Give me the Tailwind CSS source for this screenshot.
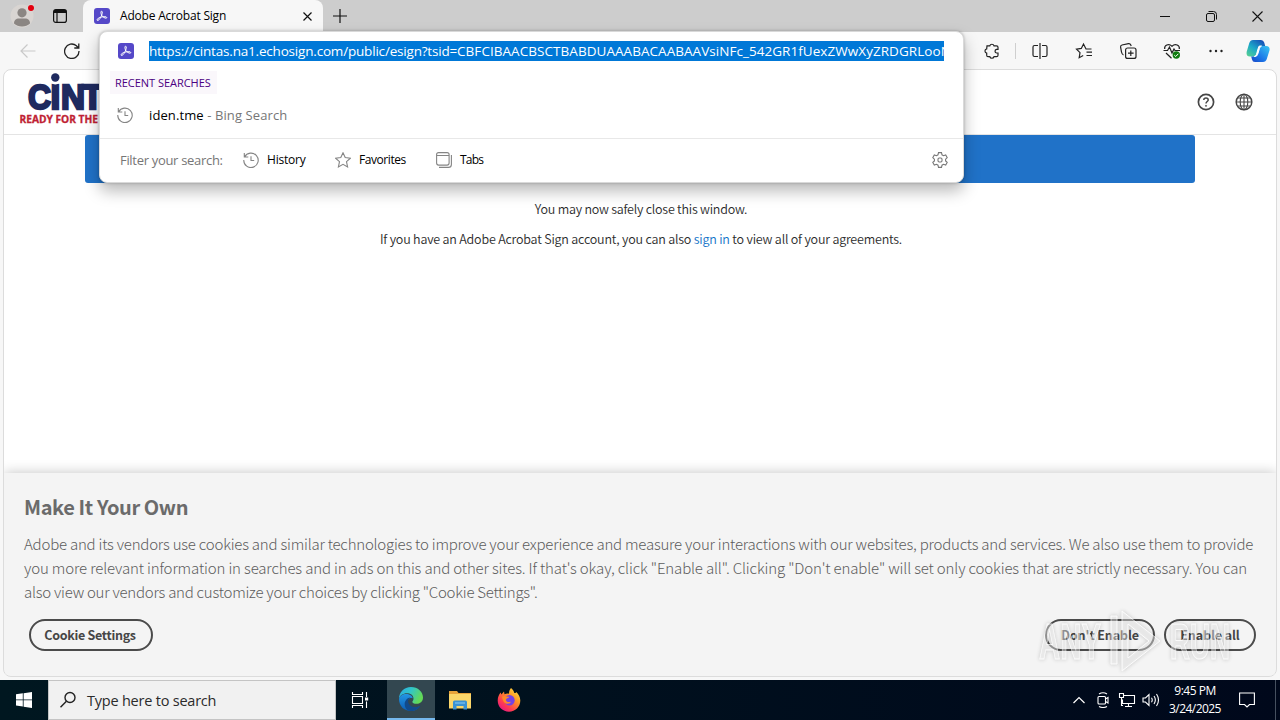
<!DOCTYPE html>
<html lang="en">
<head>
<meta charset="utf-8">
<title>Adobe Acrobat Sign</title>
<script src="https://cdn.jsdelivr.net/npm/@tailwindcss/browser@4"></script>
</head>
<body class="relative flex h-[720px] w-[1280px] flex-col overflow-hidden bg-[#f7f7f7] font-['Open_Sans',sans-serif] text-black">

<!-- Tab strip -->
<header class="flex h-8 shrink-0 items-end bg-[#cdcdcd]">
  <div class="flex h-8 w-[83px] items-center">
    <svg class="ml-[10px] h-6 w-6" viewBox="0 0 24 24"><circle cx="12" cy="12" r="11.5" fill="#d9d5d2"/><circle cx="12" cy="8.800" r="4.600" fill="#8b8683"/><path d="M4 19.500c0-3.500 2-5 5-5h6c3 0 5 1.500 5 5-4 4-12 4-16 0z" fill="#8b8683"/><circle cx="21" cy="4" r="4" fill="#d9d5d2"/><circle cx="21" cy="4" r="3" fill="#e3000f"/></svg>
    <svg class="ml-[18px] h-4 w-4" viewBox="0 0 16 16" fill="none" stroke="#111" stroke-width="1.200"><rect x="1.600" y="1.600" width="12.800" height="12.800" rx="2.200"/><path d="M2 3.500h12" stroke-width="3"/><path d="M5 5v9"/></svg>
  </div>
  <div class="flex h-8 w-[240px] items-center rounded-t-lg bg-[#f7f7f7]">
    <svg class="ml-[11px] h-4 w-4" viewBox="0 0 16 16"><rect width="16" height="16" rx="3" fill="#5548c8"/><path d="M3.200 12.300c-1-.9 1.600-2.600 4-3.200 2.300-.6 5.600-.7 5.600.5 0 1.300-3.200.3-4.700-1.700C6.800 6.200 6.500 3.200 7.600 3.200c1.300 0 .6 3.300-.8 6-1 2-2.800 3.900-3.600 3.100z" fill="none" stroke="#fff" stroke-width="1"/></svg>
    <span class="ml-[10px] text-[12px] leading-4 tracking-[-0.200px] whitespace-nowrap">Adobe Acrobat Sign</span>
    <svg class="mr-[11px] ml-auto h-[9px] w-[9px]" viewBox="0 0 9 9" stroke="#111" stroke-width="1.200"><path d="M.5.5l8 8M8.500.5l-8 8"/></svg>
  </div>
  <div class="flex h-8 flex-1 items-center">
    <svg class="ml-[10px] h-[14px] w-[14px]" viewBox="0 0 14 14" stroke="#111" stroke-width="1.200"><path d="M7 0v14M0 7h14"/></svg>
    <svg class="ml-auto h-[11px] w-[10px]" viewBox="0 0 10 11" stroke="#111"><path d="M0 5.500h10"/></svg>
    <svg class="ml-9 h-[11px] w-[11px]" viewBox="0 0 11 11" fill="none" stroke="#111"><rect x=".5" y="2.500" width="8" height="8" rx="1.500"/><path d="M2.500.5h5a3 3 0 0 1 3 3v5"/></svg>
    <svg class="mr-[17px] ml-[35px] h-[11px] w-[11px]" viewBox="0 0 11 11" stroke="#111" stroke-width="1.100"><path d="M.5.5l10 10M10.500.5l-10 10"/></svg>
  </div>
</header>

<!-- Toolbar -->
<nav class="flex h-[37px] shrink-0 items-center bg-[#f7f7f7]">
  <svg class="ml-5 h-4 w-4" viewBox="0 0 16 16" fill="none" stroke="#c9c9c9" stroke-width="1.200"><path d="M15.500 8H1M7.500 1.500L1 8l6.500 6.500"/></svg>
  <svg class="ml-7 h-4 w-4" viewBox="0 0 16 16" fill="none" stroke="#222" stroke-width="1.300"><path d="M15 8a7.200 7.200 0 1 1-2.600-5.300L14.500 5M14.800.5V5h-4.500"/></svg>
  <svg class="ml-auto h-[18px] w-[18px]" viewBox="0 0 18 18" fill="none" stroke="#222" stroke-width="1.200"><path d="M4 3.800h2.800a2.200 2.200 0 0 1 4.200 0h2.500q1.500 0 1.500 1.500v2h-1.500a1.900 1.900 0 0 0 0 3.700H15v2.200q0 1.500-1.500 1.500H11a2.200 2.200 0 0 1-4.200 0H5q-1.300 0-1.300-1.500v-2a2.200 2.200 0 0 1 0-4.300z"/></svg>
  <span class="ml-[14px] h-4 w-px bg-[#cfcfcf]"></span>
  <svg class="ml-[15px] h-[18px] w-[18px]" viewBox="0 0 18 18" fill="none" stroke="#222" stroke-width="1.200"><path d="M7 3.500H3.500Q2 3.500 2 5v8q0 1.500 1.500 1.500H7M11 3.500h3.500Q16 3.500 16 5v8q0 1.500-1.500 1.500H11M9 1v16"/></svg>
  <svg class="ml-[26px] h-[18px] w-[18px]" viewBox="0 0 18 18" fill="none" stroke="#222" stroke-width="1.200"><path d="M16.500 7H11L8.500 2 6.300 6.400l-4.800.8 3.500 3.500-.8 5L8.200 13.500M11.500 10.200h5.500M11.500 13.500h5.500"/></svg>
  <svg class="ml-[26px] h-[18px] w-[18px]" viewBox="0 0 18 18" fill="none" stroke="#222" stroke-width="1.200"><rect x="6.600" y="6" width="10.400" height="10.400" rx="2"/><path d="M11.800 8.500v5.500M9 11.200h5.600M4.500 13C3 12.500 2.800 11.500 2.500 10L1.600 5.200Q1.300 3.400 3 3l6.500-1.400q1.600-.3 2.300 1.400l.4 1"/></svg>
  <svg class="ml-[26px] h-[18px] w-[18px]" viewBox="0 0 18 18" fill="none" stroke="#222" stroke-width="1.200"><path d="M1.700 7C1 3.500 5.500.8 9 4.200c3.500-3.400 8-.7 7.300 2.800M.5 8.500h4l2-3.500 2.500 6 2-4 1 1.500h5M3 11l5.500 5.300"/><circle cx="13.300" cy="13" r="3.700" fill="#107c10" stroke="none"/><path d="M11.300 13.200l1.400 1.300 2.600-2.700" stroke="#fff" stroke-width="1"/></svg>
  <svg class="ml-[27px] h-4 w-4" viewBox="0 0 16 16" fill="#222"><circle cx="2.500" cy="8" r="1.200"/><circle cx="8" cy="8" r="1.200"/><circle cx="13.500" cy="8" r="1.200"/></svg>
  <svg class="mr-[10px] ml-[22px] h-6 w-6" viewBox="0 0 24 24">
    <defs><linearGradient id="cpA" x1="0" y1="1" x2=".8" y2="0"><stop offset="0" stop-color="#5bd38d"/><stop offset=".5" stop-color="#1ba8c9"/><stop offset="1" stop-color="#174fb7"/></linearGradient><linearGradient id="cpB" x1="1" y1="0" x2="0" y2="1"><stop offset="0" stop-color="#38c8f2"/><stop offset=".6" stop-color="#1b76e8"/><stop offset="1" stop-color="#1845c5"/></linearGradient></defs>
    <path d="M7 1h8q2.500 0 3.200 2.500l1 3.500h-4q-2 0-2.600 2l-1.800 6.500q-.6 2-2.600 2H4Q0 17.500.6 13L3.300 4Q4.300 1 7 1z" fill="url(#cpA)"/><path d="M17 23H9q-2.500 0-3-2.500l-.8-3h3.200q2 0 2.600-2L12.800 9q.6-2 2.600-2H20q4 0 3.600 4l-2.800 9Q19.800 23 17 23z" fill="url(#cpB)"/><path d="M13.300 7h2.200q-1.500.5-2 2.300l-1.800 6q-.6 2.200-3 2.200h-.5q1.800-.4 2.300-2.200l1.700-6q.4-1.600 1.100-2.300z" fill="#fff" stroke="#fff" stroke-width="1"/>
  </svg>
</nav>

<!-- Page -->
<main class="mx-[3px] mb-[3px] flex flex-1 flex-col overflow-hidden rounded-lg border border-[#dcdcdc] bg-white">
  <div class="flex h-[65px] shrink-0 items-center border-b border-[#e4e4e4]">
    <svg class="ml-[14px] h-[60px] w-[90px]" viewBox="18 72 90 60" font-family="Liberation Sans" font-weight="700">
      <g fill="#1f2a5f" stroke="#1f2a5f" font-size="35" stroke-width="2.400"><text x="28" y="109" textLength="23" lengthAdjust="spacingAndGlyphs">C</text><text x="50.500" y="109">I</text><text x="61" y="109" textLength="24" lengthAdjust="spacingAndGlyphs">N</text><text x="82" y="109">T</text></g><circle cx="55.300" cy="78.500" r="6" fill="#fff"/><circle cx="55.300" cy="77.500" r="4.200" fill="#1f2a5f"/>
      <text x="19.500" y="123" font-family="Open Sans" font-weight="700" font-size="10" textLength="78.500" lengthAdjust="spacingAndGlyphs" fill="#c01f34" stroke="#c01f34" stroke-width=".3">READY FOR THE</text>
    </svg>
    <svg class="mt-[-1px] ml-auto h-5 w-5" viewBox="0 0 20 20" fill="none" stroke="#464646" stroke-width="1.700"><circle cx="10" cy="10" r="7.600"/><path d="M7.800 8c0-2.700 4.400-2.700 4.400 0 0 1.500-2.200 1.600-2.200 3.500" stroke-width="1.500"/><circle cx="10" cy="13.800" r=".6" fill="#464646" stroke-width=".7"/></svg>
    <svg class="mt-[-1px] mr-[22.500px] ml-[17.500px] h-5 w-5" viewBox="0 0 20 20" fill="none" stroke="#464646" stroke-width="1.100"><circle cx="10" cy="10" r="7.800" stroke-width="1.500"/><ellipse cx="10" cy="10" rx="3.800" ry="7.800"/><path d="M10 2v16M2 10h16M3.500 6h13M3.500 14h13"/></svg>
  </div>
  <div class="mx-auto h-12 w-[1110px] shrink-0 rounded-[3px] bg-[#2072c8]"></div>
  <div class="flex flex-col items-center pt-4 pl-0.5 font-['Noto_Sans_CJK_SC',sans-serif] text-[12.500px] font-[350] text-[#2c2c2c]">
    <p class="h-[30px] leading-5 tracking-[-0.230px] whitespace-nowrap">You may now safely close this window.</p>
    <p class="h-[30px] leading-5 tracking-[-0.200px] whitespace-nowrap">If you have an Adobe Acrobat Sign account, you can also <a class="text-[#1473c8]">sign in</a> to view all of your agreements.</p>
  </div>
  <section class="mt-auto flex h-[203px] shrink-0 flex-col bg-[#f4f4f4] px-5 pt-[21px] font-['Noto_Sans_CJK_SC',sans-serif] text-[#6b6b6b] shadow-[0_0_12px_rgba(0,0,0,0.24)]">
    <h2 class="text-[20px] leading-[26px] font-bold tracking-[-0.400px] whitespace-nowrap">Make It Your Own</h2>
    <div class="mt-3 text-[15px] leading-6 font-light whitespace-nowrap text-[#5c5c5c]">
      <p class="tracking-[-0.220px]">Adobe and its vendors use cookies and similar technologies to improve your experience and measure your interactions with our websites, products and services. We also use them to provide</p>
      <p class="tracking-[-0.148px]">you more relevant information in searches and in ads on this and other sites. If that's okay, click "Enable all". Clicking "Don't enable" will set only cookies that are strictly necessary. You can</p>
      <p class="tracking-[-0.250px]">also view our vendors and customize your choices by clicking "Cookie Settings".</p>
    </div>
    <div class="mt-[15px] flex text-[12.500px] font-bold text-[#464646]">
      <button class="ml-[5px] h-8 w-[124px] rounded-full border-2 border-[#4b4b4b] pr-0.5 leading-7 tracking-[-0.300px] whitespace-nowrap">Cookie Settings</button>
      <button class="ml-auto h-8 w-[110px] rounded-full border-2 border-[#4b4b4b] leading-7 tracking-[-0.100px] whitespace-nowrap">Don't Enable</button>
      <button class="ml-[9px] h-8 w-[92px] rounded-full border-2 border-[#4b4b4b] leading-7 tracking-[-0.100px] whitespace-nowrap">Enable all</button>
    </div>
  </section>
</main>

<!-- Taskbar -->
<footer class="flex h-10 shrink-0 items-center bg-linear-to-r from-[#001720] to-[#00081b] text-white">
  <svg class="ml-4 h-4 w-4" viewBox="0 0 16 16" fill="#fff"><path d="M0 2.300l6.800-1v6.200H0zM7.600 1.200L16 0v7.500H7.600zM0 8.300h6.800v6.200L0 13.600zM7.600 8.300H16V16l-8.400-1.200z"/></svg>
  <div class="ml-4 flex h-10 w-[288px] items-center border border-[#c4c4c4] bg-[#f1f1f1] text-[#2b2b2b]">
    <svg class="ml-[10px] h-[18px] w-[18px]" viewBox="0 0 18 18" fill="none" stroke="#222" stroke-width="1.400"><circle cx="11" cy="6.500" r="5"/><path d="M7.400 10.200L1.500 16.300"/></svg>
    <span class="mt-0.5 ml-[10px] text-[14.500px] leading-5 tracking-[-0.220px] whitespace-nowrap">Type here to search</span>
  </div>
  <div class="flex h-10 w-[51px] items-center">
    <svg class="ml-[15px] h-[18px] w-[18px]" viewBox="0 0 18 18" fill="none" stroke="#fff" stroke-width="1.100"><path d="M1.500 1v2.500h10V1M1.500 17v-2.500h10V17M1.500 5.500h10v7h-10zM15.500 1v5M15.500 10.500V17"/><path d="M14 6.500h3.200v3H14z" fill="#fff" stroke="none"/></svg>
  </div>
  <div class="flex h-10 w-12 items-center justify-center border-b-2 border-[#76b9ed] bg-[#334750]">
    <svg class="h-6 w-6" viewBox="0 0 24 24"><defs><linearGradient id="eg" x1="0" y1="0" x2="1" y2=".4"><stop offset="0" stop-color="#2aa9e3"/><stop offset=".5" stop-color="#31c5c9"/><stop offset="1" stop-color="#63d957"/></linearGradient><linearGradient id="eb" x1="0" y1="0" x2="0" y2="1"><stop offset="0" stop-color="#2396e4"/><stop offset="1" stop-color="#0b5db5"/></linearGradient></defs><path d="M0 12C0 5 5 0 12 0s12 5 12 10.500c0 4-3 6.300-6.500 6.300-2.600 0-4.200-1-4.200-1.800 0-.7 1.200-1.200 1.200-3.200C14.500 8 11 6.300 8 6.300 4 6.300 1 8.500 0 12z" fill="url(#eg)"/><path d="M0 12c.8-3.500 4-5 7-5 3.500 0 6.500 1.800 6.800 4.300-4-1.500-5.500 1.700-5 4.200.7 4.300 5.500 6.500 11.700 4C18.500 22.500 15.500 24 12 24 5 24 0 19 0 12z" fill="url(#eb)"/><path d="M9 23.600C4 20 4.500 12 11.500 10.300c-3 2-3 5.200-1 7.500 2.500 2.800 7 3 11 .7-2 4-7 6.500-12.500 5.100z" fill="#114a8b"/></svg>
  </div>
  <svg class="ml-[13px] h-6 w-6" viewBox="0 0 24 24"><path d="M1 3h8l1.500 2H23v4H1z" fill="#e8a33a"/><path d="M1 6h22v14.500H1z" fill="#fbd66a"/><path d="M5 21.500V14q0-1.500 1.500-1.500h11Q19 12.500 19 14v7.500h-3.500V18h-7v3.500z" fill="#3a92d4"/><path d="M7 15h10" stroke="#7fc4ef" stroke-width="1.200"/></svg>
  <svg class="ml-[25px] h-6 w-6" viewBox="0 0 24 24"><defs><linearGradient id="fx" x1="1" y1="0" x2=".2" y2="1"><stop offset="0" stop-color="#fff04a"/><stop offset=".4" stop-color="#ff9a25"/><stop offset=".75" stop-color="#ff3b50"/><stop offset="1" stop-color="#e31587"/></linearGradient></defs><path d="M14 0c2 1.500 3 3.300 3.300 5 1 .3 1.800-.3 2-1 2.200 2 4 5 4 8.500 0 6.300-5 11.200-11.300 11.200S.7 19 .7 12.500c0-3.500 1.300-6 3-8l.7 2L7 3.500l.5 2.700C9 5.500 10.500 5.500 12 5.700c0-2.200.7-4.300 2-5.700z" fill="url(#fx)"/><circle cx="12.500" cy="12.300" r="5.200" fill="#7542e5"/><path d="M5 8.500c3-1.500 5 .3 7.500.2-1 1.600-3.300 1.200-3.500 3-.2 2 2.500 3 5 2-1.500 3.500-8 3.300-9-5.200z" fill="#ff8a28"/></svg>
  <svg class="ml-auto h-3 w-3" viewBox="0 0 12 12" fill="none" stroke="#fff" stroke-width="1.200"><path d="M.5 9L6 3.500 11.500 9"/></svg>
  <svg class="ml-[11px] h-4 w-[14px]" viewBox="0 0 14 16" fill="none" stroke="#fff" stroke-width="1.100"><rect x="2" y="4.500" width="7.500" height="7.500" rx="1"/><path d="M9.500 7l2.500-1.500v5.500l-2.500-1.500M3 2Q7-.5 11 2M3 14.500q4 2 8 0"/></svg>
  <svg class="ml-[8px] h-4 w-[18px]" viewBox="0 0 18 16" fill="none" stroke="#fff" stroke-width="1.100"><path d="M6 3.500h10.500v8H4.500v-4M10.500 11.500v3M7 14.500h7M1.500 1.500h4v4h-4zM3.500 5.500v8h1.500"/></svg>
  <svg class="ml-[6px] h-4 w-[18px]" viewBox="0 0 18 16" fill="none" stroke="#fff" stroke-width="1.100"><path d="M1 6h2.500L7 2.500v11L3.500 10H1zM9.500 5.700q1.500 2.300 0 4.600M12 4q2.700 4 0 8M14.500 2q4 6 0 12"/></svg>
  <div class="ml-[5px] flex w-[60px] flex-col items-center text-[12px] leading-[18px] whitespace-nowrap"><span class="tracking-[-0.500px]">9:45 PM</span><span class="tracking-[-0.550px]">3/24/2025</span></div>
  <svg class="ml-[14px] h-4 w-4" viewBox="0 0 16 16" fill="none" stroke="#fff" stroke-width="1.100"><path d="M.6 1h14.800v11.500H10.500L8 15l-2.500-2.500H.6z"/></svg>
  <span class="ml-5 h-10 w-px bg-[#46505f]"></span><span class="w-1"></span>
</footer>

<!-- Address bar dropdown -->
<div class="absolute top-[31px] left-[99px] flex h-[152px] w-[865px] flex-col rounded-lg border border-[#d9d9d9] bg-white shadow-[0_8px_16px_rgba(0,0,0,0.28),0_0_3px_rgba(0,0,0,0.25)]">
  <div class="flex h-[38px] items-center">
    <svg class="ml-[18px] h-4 w-4" viewBox="0 0 16 16"><rect width="16" height="16" rx="3" fill="#5548c8"/><path d="M3.200 12.300c-1-.9 1.600-2.600 4-3.200 2.300-.6 5.600-.7 5.600.5 0 1.300-3.200.3-4.700-1.700C6.800 6.200 6.500 3.200 7.600 3.200c1.300 0 .6 3.300-.8 6-1 2-2.800 3.900-3.600 3.100z" fill="none" stroke="#fff" stroke-width="1"/></svg>
    <span class="ml-[15px] h-5 w-[795px] overflow-hidden bg-[#0078d7] text-[13.500px] leading-5 tracking-[0.050px] whitespace-nowrap text-white"><span class="tracking-[-0.190px]">https://cintas.na1.echosign.com/public/esign?tsid=</span>CBFCIBAACBSCTBABDUAAABACAABAAVsiNFc_542GR1fUexZWwXyZRDGRLooN</span>
  </div>
  <div class="mt-px ml-[10px] flex h-[23px] w-[107px] items-center bg-[#faf7fb] pl-[5px] text-[11px] leading-4 tracking-[-0.030px] whitespace-nowrap text-[#4b0082]">RECENT SEARCHES</div>
  <div class="flex h-[45px] items-center border-b border-[#e8e8e8] pb-[3px]">
    <svg class="ml-[17px] h-4 w-4" viewBox="0 0 16 16" fill="none" stroke="#858585" stroke-width="1.100"><path d="M1.300 1v4h4M1.600 5A7.200 7.200 0 1 1 .8 8M8 4.300v4.200h3.200"/></svg>
    <span class="ml-4 text-[13px] leading-5 tracking-[0.100px] whitespace-nowrap">iden.tme <span class="text-[#767676]">- Bing Search</span></span>
  </div>
  <div class="flex h-[43px] items-center pb-[2px] text-[12px] leading-4 whitespace-nowrap">
    <span class="ml-5 w-[123px] text-[13px] tracking-[-0.310px] text-[#767676]">Filter your search:</span>
    <svg class="h-4 w-4" viewBox="0 0 16 16" fill="none" stroke="#858585" stroke-width="1.100"><path d="M1.300 1v4h4M1.600 5A7.200 7.200 0 1 1 .8 8M8 4.300v4.200h3.200"/></svg>
    <span class="ml-2 w-[68px] tracking-[-0.200px]">History</span>
    <svg class="h-4 w-4" viewBox="0 0 16 16" fill="none" stroke="#858585" stroke-width="1.100"><path d="M8 .8l2.200 4.800 5.200.6-3.900 3.500 1.100 5.200L8 12.300l-4.600 2.600 1.100-5.200L.6 6.200l5.200-.6z"/></svg>
    <span class="ml-2 w-[77px] tracking-[-0.430px]">Favorites</span>
    <svg class="h-4 w-4" viewBox="0 0 16 16" fill="none" stroke="#858585" stroke-width="1.100"><rect x=".6" y=".6" width="12.500" height="12.500" rx="2"/><path d="M.6 3.500h12.500M15.400 3v9.400a3 3 0 0 1-3 3H3"/></svg>
    <span class="ml-2 tracking-[-0.800px]">Tabs</span>
    <svg class="mr-[15px] ml-auto h-4 w-4" viewBox="0 0 16 16" fill="none" stroke="#777" stroke-width="1.100"><path d="M6.500.6h3l.5 2.200 1.500.9 2.200-.7 1.500 2.600L13.600 7.200v1.700l1.600 1.500-1.500 2.600-2.200-.7-1.500.9-.5 2.200h-3L6 13.200l-1.500-.9-2.200.7L.8 10.400l1.600-1.500V7.200L.8 5.600 2.300 3l2.200.7L6 2.800z"/><rect x="6" y="6" width="4" height="4" rx="1.200"/></svg>
  </div>
</div>

<!-- Watermark -->
<svg class="absolute top-[606px] left-[1036px] h-[70px] w-[204px] drop-shadow-[0_0_2px_rgba(0,0,0,0.35)]" viewBox="0 0 204 70" opacity=".7" font-family="Liberation Sans" font-size="50" font-weight="700" fill="#f7f7f7" fill-opacity=".6" stroke="#fff" stroke-width="1">
  <text x="3" y="53" textLength="62" lengthAdjust="spacingAndGlyphs">ANY</text>
  <text x="134" y="53" textLength="60" lengthAdjust="spacingAndGlyphs">RUN</text>
  <path d="M75 10v48h6V10zM86 5l38 30-38 30zM92 18l21 17-21 17z" fill-rule="evenodd"/>
</svg>
</body>
</html>
